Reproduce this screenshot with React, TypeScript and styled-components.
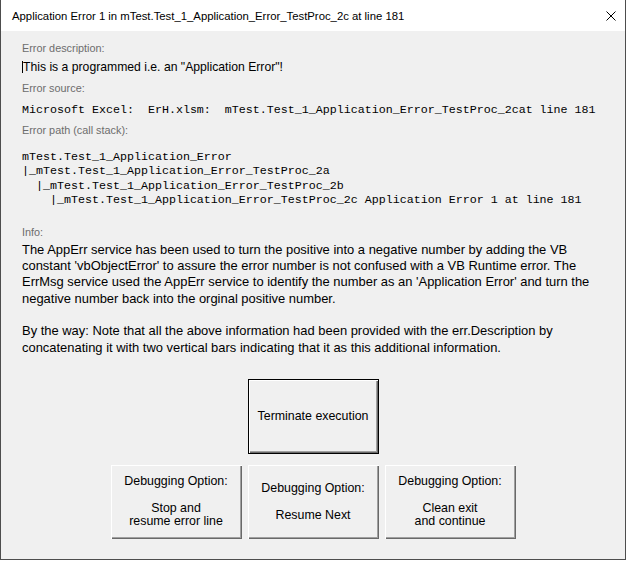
import React from "react";
import styled, { createGlobalStyle } from "styled-components";

const GlobalStyle = createGlobalStyle`
  html, body { margin: 0; padding: 0; background: #ffffff; }
  * { box-sizing: border-box; }
`;

const Window = styled.div`
  width: 626px;
  height: 560px;
  display: flex;
  flex-direction: column;
  border-left: 1px solid #4d4d4d;
  border-right: 1px solid #4d4d4d;
  border-bottom: 1px solid #4d4d4d;
  font-family: "Liberation Sans", Arial, sans-serif;
  color: #000;
`;

const TitleBar = styled.div`
  height: 31px;
  flex: none;
  display: flex;
  align-items: center;
  background: #ffffff;
  padding: 0 9px 0 11px;
`;

const Title = styled.div`
  font-size: 11.33px;
  line-height: 14px;
  white-space: nowrap;
  flex: 1;
`;

const CloseIcon = styled.svg`
  width: 10px;
  height: 10px;
  display: block;
`;

const Body = styled.div`
  flex: 1;
  background: #f0f0f0;
  padding-top: 10px;
  display: flex;
  flex-direction: column;
`;

const Details = styled.div`
  padding-left: 21px;
  display: flex;
  flex-direction: column;
`;

const Label = styled.div<{ $gap?: number }>`
  margin-top: ${(p) => p.$gap ?? 0}px;
  font-size: 10.85px;
  line-height: 14px;
  color: #6d6d6d;
  white-space: nowrap;
`;

const Description = styled.div`
  margin-top: 4px;
  font-size: 12.2px;
  line-height: 16px;
  white-space: nowrap;
`;

const Caret = styled.span`
  display: inline-block;
  width: 1px;
  height: 12px;
  background: #000;
  vertical-align: -2px;
`;

const Mono = styled.div<{ $gap: number }>`
  margin-top: ${(p) => p.$gap}px;
  font-family: "Liberation Mono", "Courier New", monospace;
  font-size: 11.67px;
  line-height: 14.5px;
  white-space: pre;
`;

const InfoText = styled.div`
  margin-top: 2.8px;
  font-size: 12.95px;
  line-height: 16.33px;
  white-space: pre;
`;

const Actions = styled.div`
  margin-top: 22.8px;
  display: flex;
  flex-direction: column;
  align-items: center;
  gap: 11px;
`;

const ButtonBase = styled.div`
  display: flex;
  align-items: center;
  justify-content: center;
  text-align: center;
  white-space: pre;
  font-size: 12.4px;
  line-height: 13.4px;
  background: #f0f0f0;
`;

const DefaultButton = styled(ButtonBase)`
  width: 131px;
  height: 75px;
  border: 1px solid #000;
  box-shadow: inset 1px 1px 0 #ffffff, inset -1px -1px 0 #696969,
    inset -2px -2px 0 #a0a0a0;
`;

const ButtonRow = styled.div`
  display: flex;
  gap: 6px;
`;

const OptionButton = styled(ButtonBase)`
  width: 131px;
  height: 74px;
  box-shadow: inset 1px 1px 0 #ffffff, inset -1px -1px 0 #696969,
    inset -2px -2px 0 #a0a0a0;
`;

const source =
  "Microsoft Excel:  ErH.xlsm:  mTest.Test_1_Application_Error_TestProc_2cat line 181";

const stack = [
  "mTest.Test_1_Application_Error",
  "|_mTest.Test_1_Application_Error_TestProc_2a",
  "  |_mTest.Test_1_Application_Error_TestProc_2b",
  "    |_mTest.Test_1_Application_Error_TestProc_2c Application Error 1 at line 181",
].join("\n");

const info = [
  "The AppErr service has been used to turn the positive into a negative number by adding the VB",
  "constant 'vbObjectError' to assure the error number is not confused with a VB Runtime error. The",
  "ErrMsg service used the AppErr service to identify the number as an 'Application Error' and turn the",
  "negative number back into the orginal positive number.",
  "",
  "By the way: Note that all the above information had been provided with the err.Description by",
  "concatenating it with two vertical bars indicating that it as this additional information.",
].join("\n");

const options = [
  "Debugging Option:\n\nStop and\nresume error line",
  "Debugging Option:\n\nResume Next",
  "Debugging Option:\n\nClean exit\nand continue",
];

export default function App() {
  return (
    <>
      <GlobalStyle />
      <Window>
        <TitleBar>
          <Title>Application Error 1 in mTest.Test_1_Application_Error_TestProc_2c at line 181</Title>
          <CloseIcon viewBox="0 0 10 10">
            <path d="M0.5 0.5 L9.5 9.5 M9.5 0.5 L0.5 9.5" stroke="#000" strokeWidth="1" fill="none" />
          </CloseIcon>
        </TitleBar>
        <Body>
          <Details>
            <Label>Error description:</Label>
            <Description>
              <Caret />
              This is a programmed i.e. an "Application Error"!
            </Description>
            <Label $gap={6}>Error source:</Label>
            <Mono $gap={8}>{source}</Mono>
            <Label $gap={5.5}>Error path (call stack):</Label>
            <Mono $gap={12.75}>{stack}</Mono>
            <Label $gap={17.25}>Info:</Label>
            <InfoText>{info}</InfoText>
          </Details>
          <Actions>
            <DefaultButton>Terminate execution</DefaultButton>
            <ButtonRow>
              {options.map((o) => (
                <OptionButton key={o}>{o}</OptionButton>
              ))}
            </ButtonRow>
          </Actions>
        </Body>
      </Window>
    </>
  );
}
